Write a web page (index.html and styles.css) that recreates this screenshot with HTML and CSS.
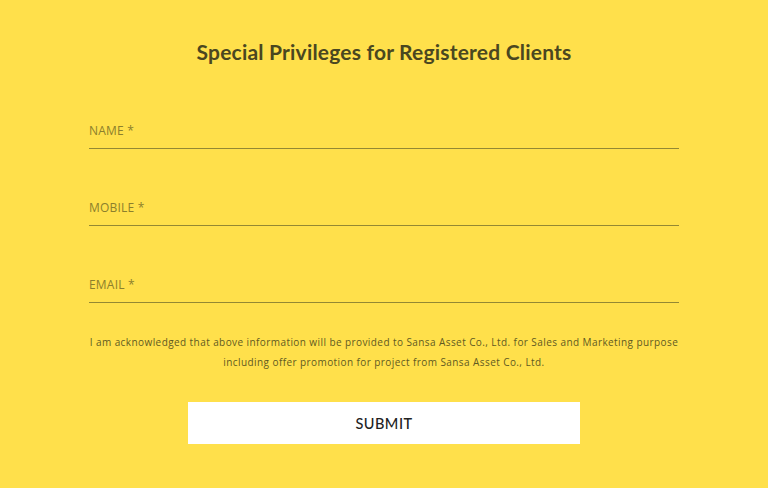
FILE: index.html
```html
<!DOCTYPE html>
<html lang="en">
<head>
<meta charset="utf-8">
<title>Special Privileges for Registered Clients</title>
<link rel="stylesheet" href="styles.css">
</head>
<body>
<main class="page">
  <h1 class="title">Special Privileges for Registered Clients</h1>
  <form class="form">
    <label class="field"><span class="label">NAME *</span></label>
    <label class="field"><span class="label">MOBILE *</span></label>
    <label class="field"><span class="label">EMAIL *</span></label>
    <p class="note">I am acknowledged that above information will be provided to Sansa Asset Co., Ltd. for Sales and Marketing purpose<br>including offer promotion for project from Sansa Asset Co., Ltd.</p>
    <button type="button" class="submit">SUBMIT</button>
  </form>
</main>
</body>
</html>
```
FILE: styles.css
```css
* { box-sizing: border-box; }
html, body { margin: 0; padding: 0; }
body {
  background: #ffe04b;
  width: 768px;
  height: 488px;
  overflow: hidden;
  font-family: "Open Sans", "Noto Sans", sans-serif;
}
.page {
  display: flex;
  flex-direction: column;
  align-items: center;
  padding-top: 40px;
}
.title {
  margin: 0;
  font-family: Lato, "Noto Sans", sans-serif;
  font-weight: 700;
  font-size: 21px;
  line-height: 24px;
  color: #4a4720;
  letter-spacing: 0.2px;
}
.form {
  width: 590px;
  margin-top: 8px;
  display: flex;
  flex-direction: column;
  align-items: center;
}
.field {
  width: 100%;
  height: 77px;
  display: flex;
  flex-direction: column;
  justify-content: flex-end;
  padding-bottom: 9px;
  border-bottom: 1px solid #948833;
}
.label {
  font-size: 12px;
  line-height: 16px;
  color: #8c7f2c;
  letter-spacing: 0.2px;
}
.note {
  margin: 29px 0 0;
  font-size: 10px;
  line-height: 20px;
  color: #5f5a22;
  text-align: center;
  white-space: nowrap;
  letter-spacing: 0.42px;
}
.submit {
  margin-top: 30px;
  width: 392px;
  height: 42px;
  border: 0;
  background: #ffffff;
  font-family: Lato, "Noto Sans", sans-serif;
  font-size: 14.5px;
  font-weight: 500;
  letter-spacing: 0.5px;
  color: #222222;
  cursor: pointer;
}
```
